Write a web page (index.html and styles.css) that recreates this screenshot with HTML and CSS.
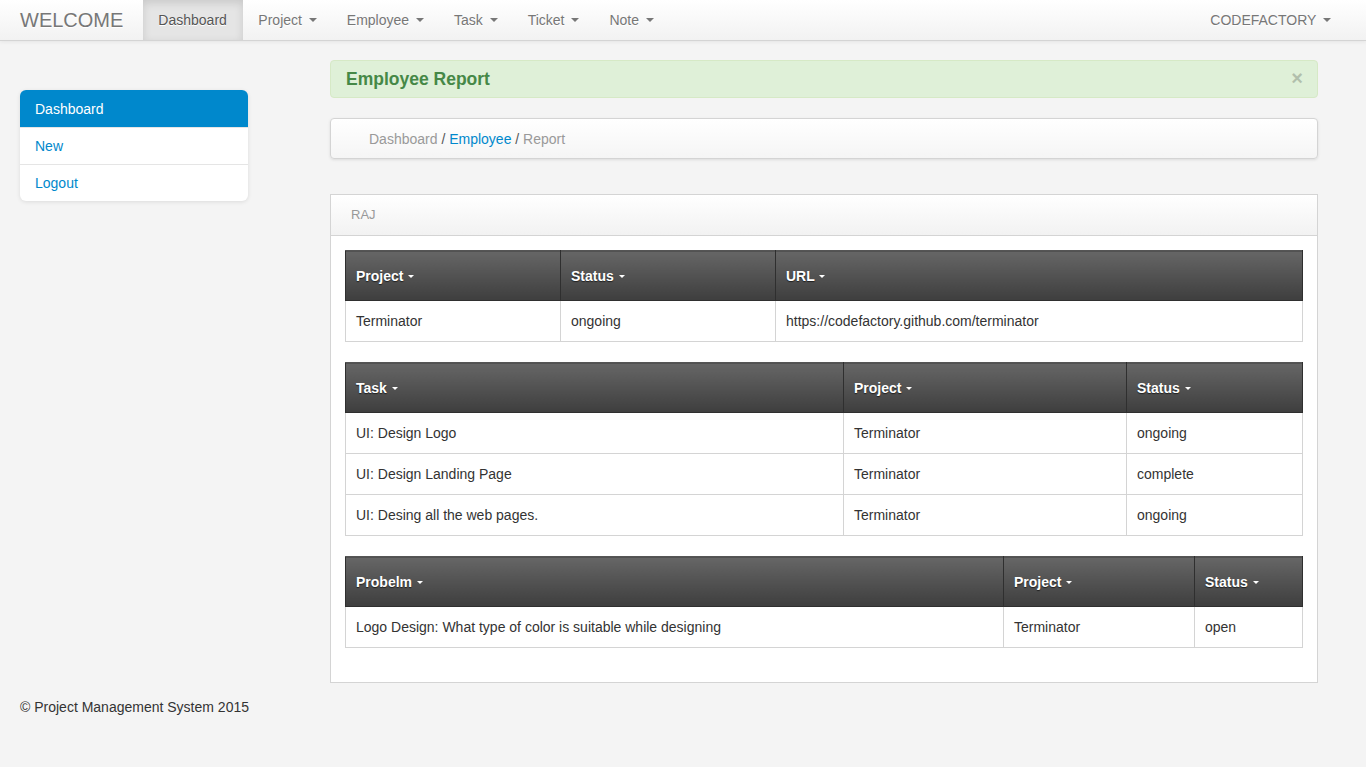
FILE: index.html
```html
<!DOCTYPE html>
<html>
<head>
<meta charset="utf-8">
<title>Employee Report</title>
<link rel="stylesheet" href="styles.css">
</head>
<body>
<header class="navbar">
  <a class="brand" href="#">WELCOME</a>
  <ul class="nav">
    <li class="active"><a href="#">Dashboard</a></li>
    <li><a href="#">Project <b class="caret"></b></a></li>
    <li><a href="#">Employee <b class="caret"></b></a></li>
    <li><a href="#">Task <b class="caret"></b></a></li>
    <li><a href="#">Ticket <b class="caret"></b></a></li>
    <li><a href="#">Note <b class="caret"></b></a></li>
  </ul>
  <ul class="nav nav-right">
    <li><a href="#">CODEFACTORY <b class="caret"></b></a></li>
  </ul>
</header>

<div class="layout">
  <aside class="sidebar">
    <ul class="side-nav">
      <li class="active"><a href="#">Dashboard</a></li>
      <li><a href="#">New</a></li>
      <li><a href="#">Logout</a></li>
    </ul>
  </aside>

  <main class="main">
    <div class="alert">
      <h4>Employee Report</h4>
      <span class="close">&times;</span>
    </div>

    <div class="breadcrumb">
      <span>Dashboard</span> <span class="divider">/</span> <a href="#">Employee</a> <span class="divider">/</span> <span>Report</span>
    </div>

    <section class="panel">
      <div class="panel-heading">RAJ</div>
      <div class="panel-body">
        <table class="grid t1">
          <thead>
            <tr>
              <th class="c1">Project <b class="tcaret"></b></th>
              <th class="c2">Status <b class="tcaret"></b></th>
              <th>URL <b class="tcaret"></b></th>
            </tr>
          </thead>
          <tbody>
            <tr><td>Terminator</td><td>ongoing</td><td>https://codefactory.github.com/terminator</td></tr>
          </tbody>
        </table>

        <table class="grid t2">
          <thead>
            <tr>
              <th class="c1">Task <b class="tcaret"></b></th>
              <th class="c2">Project <b class="tcaret"></b></th>
              <th>Status <b class="tcaret"></b></th>
            </tr>
          </thead>
          <tbody>
            <tr><td>UI: Design Logo</td><td>Terminator</td><td>ongoing</td></tr>
            <tr><td>UI: Design Landing Page</td><td>Terminator</td><td>complete</td></tr>
            <tr><td>UI: Desing all the web pages.</td><td>Terminator</td><td>ongoing</td></tr>
          </tbody>
        </table>

        <table class="grid t3">
          <thead>
            <tr>
              <th class="c1">Probelm <b class="tcaret"></b></th>
              <th class="c2">Project <b class="tcaret"></b></th>
              <th>Status <b class="tcaret"></b></th>
            </tr>
          </thead>
          <tbody>
            <tr><td>Logo Design: What type of color is suitable while designing</td><td>Terminator</td><td>open</td></tr>
          </tbody>
        </table>
      </div>
    </section>
  </main>
</div>

<footer class="footer">&copy; Project Management System 2015</footer>
</body>
</html>
```

FILE: styles.css
```css
* { box-sizing: border-box; }

html, body { margin: 0; padding: 0; }

body {
  font-family: "Liberation Sans", Arial, Helvetica, sans-serif;
  font-size: 14px;
  line-height: 20px;
  color: #333;
  background: #f4f4f4;
}

a { color: #0088cc; text-decoration: none; }

ul { margin: 0; padding: 0; list-style: none; }

/* Navbar */
.navbar {
  display: flex;
  align-items: stretch;
  height: 41px;
  padding: 0 20px;
  background: linear-gradient(to bottom, #ffffff, #f2f2f2);
  border-bottom: 1px solid #d4d4d4;
  box-shadow: 0 1px 4px rgba(0, 0, 0, 0.065);
}

.brand {
  display: block;
  padding: 10px 20px 10px 0;
  font-size: 20px;
  line-height: 20px;
  color: #777;
  text-shadow: 0 1px 0 #fff;
}

.nav {
  display: flex;
}

.nav li a {
  display: block;
  padding: 10px 15px;
  color: #777;
  text-shadow: 0 1px 0 #fff;
}

.nav li.active a {
  color: #555;
  background: #e5e5e5;
  box-shadow: inset 0 3px 8px rgba(0, 0, 0, 0.125);
  padding: 10px 15px 10px 15px;
  width: 100px;
}

.nav-right { margin-left: auto; }

.caret {
  display: inline-block;
  width: 0;
  height: 0;
  vertical-align: top;
  margin-top: 8px;
  margin-left: 3px;
  border-top: 4px solid #777;
  border-left: 4px solid transparent;
  border-right: 4px solid transparent;
}

/* Layout */
.layout {
  display: grid;
  grid-template-columns: 310px 988px;
  padding: 0 20px;
  margin-top: 19px;
}

.sidebar { padding-top: 30px; }

.side-nav {
  width: 228px;
  background: #fff;
  border-radius: 6px;
  box-shadow: 0 1px 4px rgba(0, 0, 0, 0.1);
  overflow: hidden;
}

.side-nav li a {
  display: block;
  padding: 8px 15px 8px;
  border-top: 1px solid #e5e5e5;
  color: #0088cc;
}

.side-nav li:first-child a { border-top: 0; }

.side-nav li.active a {
  background: #0088cc;
  color: #fff;
  padding: 9px 15px 8px;
}

/* Alert */
.alert {
  position: relative;
  padding: 8px 35px 8px 15px;
  background: #dff0d8;
  border: 1px solid #d6e9c6;
  border-radius: 4px;
  color: #468847;
  margin-bottom: 20px;
}

.alert h4 {
  margin: 0;
  font-size: 17.5px;
  line-height: 20px;
  font-weight: bold;
}

.close {
  position: absolute;
  top: 7px;
  right: 14px;
  font-size: 20px;
  font-weight: bold;
  line-height: 20px;
  color: #000;
  opacity: 0.2;
}

/* Breadcrumb */
.breadcrumb {
  padding: 10px 15px 9px 38px;
  background: linear-gradient(to bottom, #ffffff, #f5f5f5);
  border: 1px solid #d4d4d4;
  border-radius: 4px;
  box-shadow: 0 1px 3px rgba(0, 0, 0, 0.1);
  color: #999;
  margin-bottom: 35px;
}

.breadcrumb .divider { color: #555; }

/* Panel */
.panel {
  background: #fff;
  border: 1px solid #d4d4d4;
}

.panel-heading {
  padding: 10px 20px;
  font-size: 13px;
  color: #999;
  background: linear-gradient(to bottom, #ffffff, #f2f2f2);
  border-bottom: 1px solid #d4d4d4;
}

.panel-body {
  padding: 14px 14px 14px;
}

.grid {
  width: 100%;
  border-collapse: collapse;
  table-layout: fixed;
  margin-bottom: 20px;
}

.grid th {
  text-align: left;
  padding: 15px 10px 14px;
  font-weight: bold;
  color: #fff;
  text-shadow: 0 1px 1px rgba(0, 0, 0, 0.6);
  background: linear-gradient(to bottom, #666666, #3e3e3e);
  border: 1px solid #2f2f2f;
  border-top-color: #555;
}

.grid td {
  padding: 10px 10px 10px;
  border: 1px solid #d4d4d4;
  background: #fff;
}

.tcaret {
  display: inline-block;
  width: 0;
  height: 0;
  vertical-align: middle;
  margin-left: 1px;
  margin-top: -2px;
  border-top: 3px solid #fff;
  border-left: 3px solid transparent;
  border-right: 3px solid transparent;
}

.t1 .c1 { width: 215px; }
.t1 .c2 { width: 215px; }
.t2 .c1 { width: 498px; }
.t2 .c2 { width: 283px; }
.t3 .c1 { width: 658px; }
.t3 .c2 { width: 191px; }

/* Footer */
.footer {
  padding: 14px 20px 40px;
}
```
